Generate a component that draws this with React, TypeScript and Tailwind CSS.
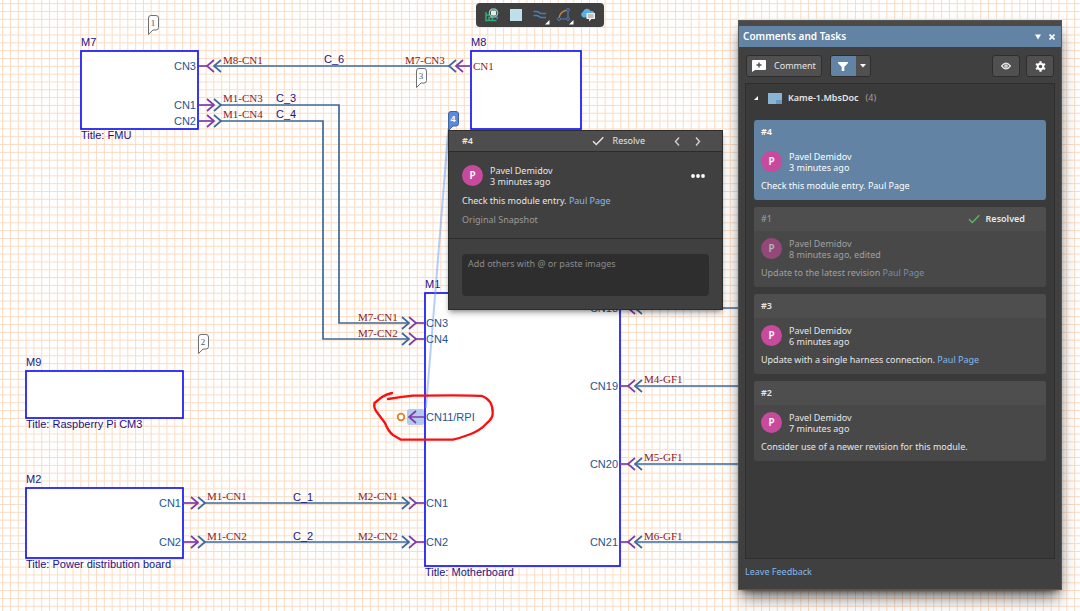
import { useState } from "react";
import clsx from "clsx";

interface Comment {
  id: number;
  author: string;
  time: string;
  text: string;
  mention?: string;
  resolved?: boolean;
}

interface Block {
  name: string;
  title?: string;
  x: number;
  y: number;
  width: number;
  height: number;
}

interface Port {
  x: number;
  y: number;
  side: "left" | "right";
  dir: "in" | "out";
}

interface Label {
  x: number;
  y: number;
  text: string;
  kind: "net" | "port" | "ref";
  end?: boolean;
}

const comments: Comment[] = [
  { id: 4, author: "Pavel Demidov", time: "3 minutes ago", text: "Check this module entry.", mention: "Paul Page" },
  {
    id: 1,
    author: "Pavel Demidov",
    time: "8 minutes ago, edited",
    text: "Update to the latest revision",
    mention: "Paul Page",
    resolved: true,
  },
  {
    id: 3,
    author: "Pavel Demidov",
    time: "6 minutes ago",
    text: "Update with a single harness connection.",
    mention: "Paul Page",
  },
  { id: 2, author: "Pavel Demidov", time: "7 minutes ago", text: "Consider use of a newer revision for this module." },
];

const blocks: Block[] = [
  { name: "M7", title: "FMU", x: 81, y: 51, width: 117, height: 78 },
  { name: "M8", x: 471, y: 51, width: 110, height: 78 },
  { name: "M9", title: "Raspberry Pi CM3", x: 26, y: 371, width: 157, height: 47 },
  { name: "M2", title: "Power distribution board", x: 26, y: 488, width: 157, height: 70 },
  { name: "M1", title: "Motherboard", x: 425, y: 293, width: 195, height: 273 },
];

const ports: Port[] = [
  { x: 199, y: 66, side: "right", dir: "in" },
  { x: 199, y: 105, side: "right", dir: "out" },
  { x: 199, y: 121, side: "right", dir: "out" },
  { x: 183, y: 503, side: "right", dir: "out" },
  { x: 183, y: 542, side: "right", dir: "out" },
  { x: 471, y: 66, side: "left", dir: "out" },
  { x: 424, y: 323, side: "left", dir: "in" },
  { x: 424, y: 339, side: "left", dir: "in" },
  { x: 424, y: 503, side: "left", dir: "in" },
  { x: 424, y: 542, side: "left", dir: "in" },
  { x: 620, y: 308, side: "right", dir: "in" },
  { x: 620, y: 386, side: "right", dir: "in" },
  { x: 620, y: 464, side: "right", dir: "in" },
  { x: 620, y: 542, side: "right", dir: "in" },
];

const wires = [
  "M214 66H449",
  "M221 105H339V323H408",
  "M221 121H323V339H408",
  "M205 503H408",
  "M205 542H408",
  "M635 308H760",
  "M635 386H760",
  "M635 464H760",
  "M635 542H760",
];

const labels: Label[] = [
  { x: 196, y: 70, text: "CN3", kind: "port", end: true },
  { x: 196, y: 109, text: "CN1", kind: "port", end: true },
  { x: 196, y: 125, text: "CN2", kind: "port", end: true },
  { x: 181, y: 507, text: "CN1", kind: "port", end: true },
  { x: 181, y: 546, text: "CN2", kind: "port", end: true },
  { x: 426, y: 327, text: "CN3", kind: "port" },
  { x: 426, y: 343, text: "CN4", kind: "port" },
  { x: 426, y: 421, text: "CN11/RPI", kind: "port" },
  { x: 426, y: 507, text: "CN1", kind: "port" },
  { x: 426, y: 546, text: "CN2", kind: "port" },
  { x: 618, y: 312, text: "CN18", kind: "port", end: true },
  { x: 618, y: 390, text: "CN19", kind: "port", end: true },
  { x: 618, y: 468, text: "CN20", kind: "port", end: true },
  { x: 618, y: 546, text: "CN21", kind: "port", end: true },
  { x: 223, y: 64, text: "M8-CN1", kind: "ref" },
  { x: 223, y: 102, text: "M1-CN3", kind: "ref" },
  { x: 223, y: 118, text: "M1-CN4", kind: "ref" },
  { x: 405, y: 64, text: "M7-CN3", kind: "ref" },
  { x: 473, y: 70, text: "CN1", kind: "ref" },
  { x: 358, y: 321, text: "M7-CN1", kind: "ref" },
  { x: 358, y: 337, text: "M7-CN2", kind: "ref" },
  { x: 207, y: 500, text: "M1-CN1", kind: "ref" },
  { x: 207, y: 540, text: "M1-CN2", kind: "ref" },
  { x: 358, y: 500, text: "M2-CN1", kind: "ref" },
  { x: 358, y: 540, text: "M2-CN2", kind: "ref" },
  { x: 644, y: 383, text: "M4-GF1", kind: "ref" },
  { x: 644, y: 461, text: "M5-GF1", kind: "ref" },
  { x: 644, y: 540, text: "M6-GF1", kind: "ref" },
  { x: 324, y: 63, text: "C_6", kind: "net" },
  { x: 276, y: 102, text: "C_3", kind: "net" },
  { x: 276, y: 118, text: "C_4", kind: "net" },
  { x: 293, y: 501, text: "C_1", kind: "net" },
  { x: 293, y: 540, text: "C_2", kind: "net" },
];

const pins = [
  { id: 1, x: 148, y: 15 },
  { id: 3, x: 416, y: 68 },
  { id: 2, x: 198, y: 334 },
  { id: 4, x: 448, y: 111 },
];

const GRID = 7.825;
const gridPath = [
  ...Array.from({ length: 330 }, (_, i) => `M${(2.6 + i * GRID).toFixed(2)} 0V1600`),
  ...Array.from({ length: 204 }, (_, i) => `M0 ${(3.7 + i * GRID).toFixed(2)}H2580`),
].join("");

const labelStyles = {
  net: "fill-[#15158c] font-['Liberation_Sans',sans-serif]",
  port: "fill-[#235590] font-['Liberation_Sans',sans-serif]",
  ref: "fill-[#8b1a1a] font-['Liberation_Serif',serif]",
};

// Plug (purple) and socket (blue) chevrons next to a block edge
function Connector({ x, y, side, dir }: Port) {
  const s = side === "right" ? 1 : -1;
  // tips point at the block on "in" ports of the right side and mirrored on the left
  const [tip, open, socketTip, socketOpen] = dir === "in" && s === 1 ? [8, 15, 15, 22] : dir === "in" ? [8, 15, 15, 22] : [15, 8, 22, 15];
  return (
    <g fill="none" strokeWidth="1.7">
      <path stroke="#7d3ca8" d={`M${x} ${y}H${x + s * tip}`} />
      <path stroke="#7d3ca8" d={`M${x + s * open} ${y - 6}L${x + s * tip} ${y}L${x + s * open} ${y + 6}`} />
      <path
        stroke="#3a6a9c"
        d={`M${x + s * socketOpen} ${y - 6}L${x + s * socketTip} ${y}L${x + s * socketOpen} ${y + 6}`}
      />
    </g>
  );
}

function Pin({ id, x, y }: { id: number; x: number; y: number }) {
  const active = id === 4;
  return (
    <g>
      <path
        transform={`translate(${x} ${y})`}
        d="M.5 19.5V3Q.5.5 3 .5H8Q10.5.5 10.5 3V12.5Q10.5 15 8 15H5Z"
        fill={active ? "#5b8be0" : "#fdfdfd"}
        stroke={active ? "#41619c" : "#707070"}
      />
      <text
        x={x + 5}
        y={y + 11}
        textAnchor="middle"
        className={clsx(
          "text-[9px]",
          active
            ? "fill-white font-bold font-['Liberation_Sans',sans-serif]"
            : "fill-[#555] font-['Liberation_Serif',serif]",
        )}
      >
        {id}
      </text>
    </g>
  );
}

function Schematic() {
  return (
    <svg className="absolute inset-0 h-full w-full" role="img" aria-label="Kame-1.MbsDoc schematic">
      <path d={gridPath} stroke="#fbdcc4" fill="none" />
      {wires.map((d) => (
        <path key={d} d={d} fill="none" stroke="#3e6a9b" strokeWidth="1.7" />
      ))}
      {blocks.map((block) => (
        <g key={block.name} className="text-[11px]">
          <rect
            x={block.x}
            y={block.y}
            width={block.width}
            height={block.height}
            fill="#fff"
            stroke="#1616f8"
            strokeWidth="1.7"
          />
          <text x={block.x} y={block.y - 5} className={labelStyles.net}>
            {block.name}
          </text>
          {block.title && (
            <text x={block.x} y={block.y + block.height + 10} className={labelStyles.net}>
              Title: {block.title}
            </text>
          )}
        </g>
      ))}
      {ports.map((port) => (
        <Connector key={`${port.x}-${port.y}`} {...port} />
      ))}

      {/* Selected entry and its leader line */}
      <rect x="407" y="409" width="17" height="16" rx="2" fill="#b5c9f0" />
      <path d="M409 417H424M416 411L409 417L416 423" fill="none" stroke="#7d3ca8" strokeWidth="1.7" />
      <circle cx="401" cy="417" r="3.3" fill="#fff" stroke="#e08024" strokeWidth="1.8" />
      <path d="M448.5 128L426 408" stroke="#6b9bf5" strokeOpacity="0.5" strokeWidth="2" />

      {labels.map((label) => (
        <text
          key={`${label.x}-${label.y}`}
          x={label.x}
          y={label.y}
          textAnchor={label.end ? "end" : "start"}
          className={clsx("text-[11px]", labelStyles[label.kind])}
        >
          {label.text}
        </text>
      ))}
      {pins.map((pin) => (
        <Pin key={pin.id} {...pin} />
      ))}
      <path
        d="M392 393Q387 394 382 397L374.5 403Q373.5 407 376 411L385 423Q388 431 393 435L401 439.700H453Q460 438 468 435Q480 431 487 423Q493 418 492.700 413Q493 400 482 396Q470 395 413 395.700Q400 397 388 399"
        fill="none"
        stroke="#fb0f0f"
        strokeWidth="2.3"
        strokeLinejoin="round"
        strokeLinecap="round"
      />
    </svg>
  );
}

function CheckIcon({ className }: { className?: string }) {
  return (
    <svg viewBox="0 0 12 10" className={clsx("h-[10px] w-3", className)} fill="none" stroke="currentColor" strokeWidth="1.4">
      <path d="M1 5.200L4.300 8.500L11.300 1.300" />
    </svg>
  );
}

function Toolbar() {
  return (
    <div
      role="toolbar"
      aria-label="Active bar"
      className="absolute left-1/2 top-[3px] flex h-6 w-32 -translate-x-1/2 items-center justify-between rounded-sm bg-[#404040] px-2"
    >
      <button aria-label="Place module">
        <svg className="size-4" viewBox="0 0 16 16" fill="none">
          <path d="M2 5V13.500H12.500M2 8H5.500M5 13.500V10.500H8.500V13" stroke="#35a878" strokeWidth="1.500" />
          <circle cx="9.500" cy="6" r="4.200" fill="#3b5d55" stroke="#8cc4bc" strokeWidth="1.200" />
          <rect x="7" y="3.500" width="5" height="5" rx="1" fill="#e3efe9" />
          <path d="M12.500 9L13.500 12" stroke="#5f8fb4" strokeWidth="1.400" />
        </svg>
      </button>
      <button aria-label="Place block">
        <svg className="size-4" viewBox="0 0 16 16">
          <rect x="2" y="2" width="12" height="12" fill="#bfe0ea" />
        </svg>
      </button>
      <button aria-label="Place connection">
        <svg className="size-4 overflow-visible" viewBox="0 0 16 16" fill="none">
          <path
            d="M1.500 4.500H4.500Q6 4.500 7 5.500T9.500 6.500H14M1.500 8.500H4.500Q6 8.500 7 9.500T9.500 10.500H14"
            stroke="#4a7db8"
            strokeWidth="1.500"
          />
          <path d="M17.500 13V17.500H13Z" fill="#fff" />
        </svg>
      </button>
      <button aria-label="Draw shape">
        <svg className="size-4 overflow-visible" viewBox="0 0 16 16" fill="none">
          <path d="M3 11Q4 4 12 3" stroke="#c98a3c" strokeWidth="1.300" />
          <path d="M12 3V12H3" stroke="#4a7db8" strokeWidth="1.200" />
          <g fill="#404040" stroke="#4a7db8">
            <circle cx="12" cy="3" r="1.500" />
            <circle cx="12" cy="12" r="1.500" />
            <circle cx="3" cy="12" r="1.500" />
          </g>
          <path d="M17.500 13V17.500H13Z" fill="#fff" />
        </svg>
      </button>
      <button aria-label="Place comment">
        <svg className="size-4" viewBox="0 0 16 16">
          <path d="M3.500 10.500A3 3 0 0 1 3 4.800A4 4 0 0 1 10.500 4A3.200 3.200 0 0 1 12 10.500Z" fill="#5ab0e4" />
          <path d="M6.500 6H15V12H11.500L9 14.500V12H6.500Z" fill="#f0f0f0" />
          <path d="M8 8H13.500M8 10H13.500" stroke="#909090" />
        </svg>
      </button>
    </div>
  );
}

function Author({ comment }: { comment: Comment }) {
  return (
    <div className="flex h-[21px] items-center gap-[7px]">
      <span
        className={clsx(
          "flex size-[21px] items-center justify-center rounded-full bg-[#c84a9c] text-[10px] font-semibold text-white",
          comment.resolved && "opacity-60",
        )}
      >
        {comment.author[0]}
      </span>
      <div className="text-[9px] leading-[11px]">
        <p>{comment.author}</p>
        <p>{comment.time}</p>
      </div>
    </div>
  );
}

function CommentPopup({ comment }: { comment: Comment }) {
  return (
    <section
      aria-label={`Comment #${comment.id}`}
      className="absolute left-[448px] top-[130px] w-[275px] border border-[#2c2c2c] bg-[#404040] text-[9px] text-[#e6e6e6] shadow-md shadow-black/30"
    >
      <header className="flex h-[21px] items-center border-b border-[#2c2c2c] bg-[#4d4d4d] px-[13px]">
        <span className="font-semibold">#{comment.id}</span>
        <button className="ml-auto flex items-center gap-[9px]">
          <CheckIcon />
          Resolve
        </button>
        <button aria-label="Previous comment" className="ml-[29px]">
          <svg className="h-[9px] w-[6px]" viewBox="0 0 6 9" fill="none" stroke="#d0d0d0" strokeWidth="1.400">
            <path d="M5 .5L1.500 4.500L5 8.500" />
          </svg>
        </button>
        <button aria-label="Next comment" className="ml-[15px] mr-2">
          <svg className="h-[9px] w-[6px]" viewBox="0 0 6 9" fill="none" stroke="#d0d0d0" strokeWidth="1.400">
            <path d="M1 .5L4.500 4.500L1 8.500" />
          </svg>
        </button>
      </header>
      <div className="h-[87px] border-b border-[#2c2c2c] px-[13px] pt-[13px]">
        <div className="flex items-center justify-between">
          <Author comment={comment} />
          <button aria-label="More actions" className="mr-1">
            <svg className="h-1 w-[14px]" viewBox="0 0 14 4" fill="#fff">
              <circle cx="2" cy="2" r="1.900" />
              <circle cx="7" cy="2" r="1.900" />
              <circle cx="12" cy="2" r="1.900" />
            </svg>
          </button>
        </div>
        <p className="mt-[9px] leading-3">
          {comment.text}{" "}
          <a href="#paul-page" className="text-[#86b8ee]">
            {comment.mention}
          </a>
        </p>
        <p className="mt-[7px] leading-3 text-[#9a9a9a]">Original Snapshot</p>
      </div>
      <div className="px-[13px] pb-[13px] pt-[15px]">
        <textarea
          aria-label="Reply"
          placeholder="Add others with @ or paste images"
          className="block h-[42px] w-full resize-none rounded-sm bg-[#2e2e2e] px-[6px] py-1 leading-3 placeholder:text-[#8c8c8c]"
        />
      </div>
    </section>
  );
}

function CommentCard({ comment, selected, onSelect }: { comment: Comment; selected: boolean; onSelect: () => void }) {
  return (
    <li
      onClick={onSelect}
      className={clsx(
        "h-20 overflow-hidden rounded-[3px]",
        selected ? "bg-[#6283a3] text-white" : "bg-[#484848]",
        !selected && (comment.resolved ? "text-[#a0a0a0]" : "text-[#e6e6e6]"),
      )}
    >
      <div className={clsx("flex h-6 items-center px-[7px]", !selected && "bg-[#4e4e4e]")}>
        <span className={clsx(!comment.resolved && "font-semibold")}>#{comment.id}</span>
        {comment.resolved && (
          <span className="ml-auto mr-[14px] flex items-center gap-[6px] font-semibold text-[#e6e6e6]">
            <CheckIcon className="text-[#5cb85c]" />
            Resolved
          </span>
        )}
      </div>
      <div className="px-[7px] pt-[7px]">
        <Author comment={comment} />
        <p className="mt-2 leading-3">
          {comment.text}{" "}
          {comment.mention && (
            <a
              href="#paul-page"
              className={clsx(selected ? "text-white" : comment.resolved ? "text-[#7090b8]" : "text-[#86b8ee]")}
            >
              {comment.mention}
            </a>
          )}
        </p>
      </div>
    </li>
  );
}

function CommentsPanel({ selected, onSelect }: { selected: number; onSelect: (id: number) => void }) {
  return (
    <aside className="relative flex w-[324px] flex-col border border-[#565656] bg-[#404040] text-[9px] text-[#e6e6e6] shadow-lg shadow-black/60">
      <div className="h-[5px] bg-[#4b4a46]" />
      <header className="flex h-[21px] items-center bg-[#6283a3] px-1 text-white">
        <h1 className="text-[10px] font-semibold">Comments and Tasks</h1>
        <button aria-label="Panel menu" className="ml-auto">
          <svg className="size-[6px]" viewBox="0 0 6 6" fill="currentColor">
            <path d="M0 .5H6L3 5.500Z" />
          </svg>
        </button>
        <button aria-label="Close" className="ml-2 mr-[2px]">
          <svg className="size-[6px]" viewBox="0 0 6 6" stroke="currentColor" strokeWidth="1.700">
            <path d="M.5 .5L5.500 5.500M5.500 .5L.5 5.500" />
          </svg>
        </button>
      </header>

      <div className="mt-2 flex h-[22px] px-[7px]">
        <button className="flex items-center gap-2 rounded-[3px] border border-[#2e2e2e] bg-[#505050] px-[5px]">
          <svg className="h-3 w-[14px]" viewBox="0 0 14 12">
            <path d="M1 0H13Q14 0 14 1V9Q14 10 13 10H3L0 12V1Q0 0 1 0Z" fill="#fff" />
            <path d="M7 2.500V7.500M4.500 5H9.500" stroke="#505050" strokeWidth="1.400" />
          </svg>
          Comment
        </button>
        <div className="ml-2 flex overflow-hidden rounded-[3px] border border-[#2e2e2e]">
          <button aria-label="Filter" className="flex w-[25px] items-center justify-center bg-[#6283a3]">
            <svg className="h-[9px] w-[10px]" viewBox="0 0 10 9" fill="#fff">
              <path d="M0 0H10V1L6.300 5V9H3.700V5L0 1Z" />
            </svg>
          </button>
          <button aria-label="Filter options" className="flex w-[14px] items-center justify-center bg-[#505050]">
            <svg className="h-1 w-[6px]" viewBox="0 0 6 4" fill="#fff">
              <path d="M0 0H6L3 3.500Z" />
            </svg>
          </button>
        </div>
        <button
          aria-label="Show comments"
          className="ml-auto flex w-7 items-center justify-center rounded-[3px] border border-[#2e2e2e] bg-[#505050]"
        >
          <svg className="h-2 w-[10px]" viewBox="0 0 10 8" fill="none" stroke="#e8e8e8" strokeWidth="1.300">
            <path d="M.7 4Q5 -1.700 9.300 4Q5 9.700 .7 4Z" />
            <circle cx="5" cy="4" r="1.200" />
          </svg>
        </button>
        <button
          aria-label="Settings"
          className="ml-[6px] flex w-7 items-center justify-center rounded-[3px] border border-[#2e2e2e] bg-[#505050]"
        >
          <svg className="size-[11px]" viewBox="0 0 12 12" fill="none" stroke="#fff">
            <circle cx="6" cy="6" r="3" strokeWidth="2.200" />
            <path
              d="M6 .3V2.500M6 9.500V11.700M1.100 3.200L2.900 4.200M9.100 7.800L10.900 8.800M1.100 8.800L2.900 7.800M9.100 4.200L10.900 3.200"
              strokeWidth="2.400"
            />
          </svg>
        </button>
      </div>

      <div className="mx-[6px] mt-[6px] flex-1 border border-[#2e2e2e] bg-[#3a3a3a] px-[8px]">
        <button className="flex h-7 w-full items-center" aria-expanded="true">
          <svg className="size-1" viewBox="0 0 4 4" fill="#fff">
            <path d="M4 0V4H0Z" />
          </svg>
          <svg className="ml-[10px] h-[11px] w-[14px]" viewBox="0 0 14 11">
            <path d="M0 0H14V11H0Z" fill="#8ab4d4" />
            <path d="M8 11V7H14V11Z" fill="#6b9abc" />
          </svg>
          <span className="ml-[6px] font-semibold">Kame-1.MbsDoc</span>
          <span className="ml-[7px] text-[#a0a0a0]">(4)</span>
        </button>
        <ul className="mt-2 flex flex-col gap-[7px]">
          {comments.map((comment) => (
            <CommentCard
              key={comment.id}
              comment={comment}
              selected={comment.id === selected}
              onSelect={() => onSelect(comment.id)}
            />
          ))}
        </ul>
      </div>
      <footer className="flex h-[30px] px-[6px] pt-[7px] leading-3">
        <a href="#feedback" className="text-[#86b8ee]">
          Leave Feedback
        </a>
      </footer>
    </aside>
  );
}

export default function App() {
  const [selected, setSelected] = useState(4);

  return (
    <main className="relative flex min-h-screen justify-end overflow-hidden bg-white pb-[21px] pr-[18px] pt-5 font-['Noto_Sans',sans-serif]">
      <Schematic />
      <Toolbar />
      <CommentPopup comment={comments[0]} />
      <CommentsPanel selected={selected} onSelect={setSelected} />
    </main>
  );
}
